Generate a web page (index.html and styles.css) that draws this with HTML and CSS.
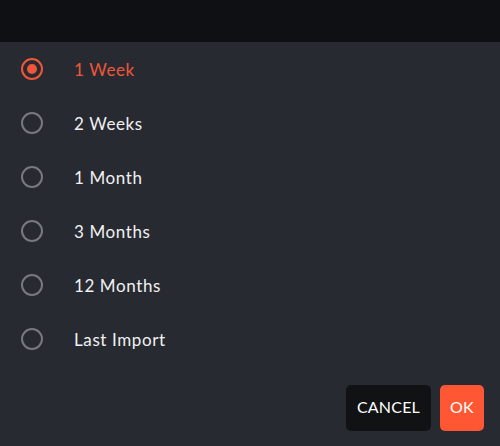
FILE: index.html
```html
<!DOCTYPE html>
<html>
<head>
<meta charset="utf-8">
<link rel="stylesheet" href="styles.css">
</head>
<body>
<div class="topbar"></div>
<div class="dialog">
  <ul class="options">
    <li class="option selected"><span class="radio"></span><span class="label">1 Week</span></li>
    <li class="option"><span class="radio"></span><span class="label">2 Weeks</span></li>
    <li class="option"><span class="radio"></span><span class="label">1 Month</span></li>
    <li class="option"><span class="radio"></span><span class="label">3 Months</span></li>
    <li class="option"><span class="radio"></span><span class="label">12 Months</span></li>
    <li class="option"><span class="radio"></span><span class="label">Last Import</span></li>
  </ul>
  <div class="actions">
    <button class="btn cancel">CANCEL</button>
    <button class="btn ok">OK</button>
  </div>
</div>
</body>
</html>
```
FILE: styles.css
```css
html, body {
  margin: 0;
  padding: 0;
  height: 100%;
}
body {
  background: #272a30;
  font-family: Lato, "Open Sans", sans-serif;
  overflow: hidden;
}
.topbar {
  height: 42px;
  background: #0f1013;
}
.dialog {
  display: flex;
  flex-direction: column;
}
.options {
  list-style: none;
  margin: 0;
  padding: 0;
}
.option {
  height: 54px;
  display: flex;
  align-items: center;
  padding-left: 21px;
}
.radio {
  box-sizing: border-box;
  width: 22px;
  height: 22px;
  border: 2px solid #77797d;
  border-radius: 50%;
  display: flex;
  align-items: center;
  justify-content: center;
  margin-right: 31px;
}
.selected .radio {
  border-color: #f0573a;
}
.selected .radio::after {
  content: "";
  width: 10px;
  height: 10px;
  border-radius: 50%;
  background: #f0573a;
}
.label {
  color: #f1f1f2;
  font-size: 17px;
  letter-spacing: 0.6px;
}
.selected .label {
  color: #f0573a;
}
.actions {
  display: flex;
  justify-content: flex-end;
  gap: 9px;
  padding-right: 16px;
  margin-top: 19px;
}
.btn {
  border: none;
  height: 46px;
  border-radius: 5px;
  font-family: Lato, "Open Sans", sans-serif;
  font-size: 16px;
  color: #ffffff;
  padding: 0 0 3px;
  letter-spacing: 0.2px;
}
.cancel {
  width: 85px;
  background: #111214;
}
.ok {
  width: 44px;
  background: #ff5733;
}
```
